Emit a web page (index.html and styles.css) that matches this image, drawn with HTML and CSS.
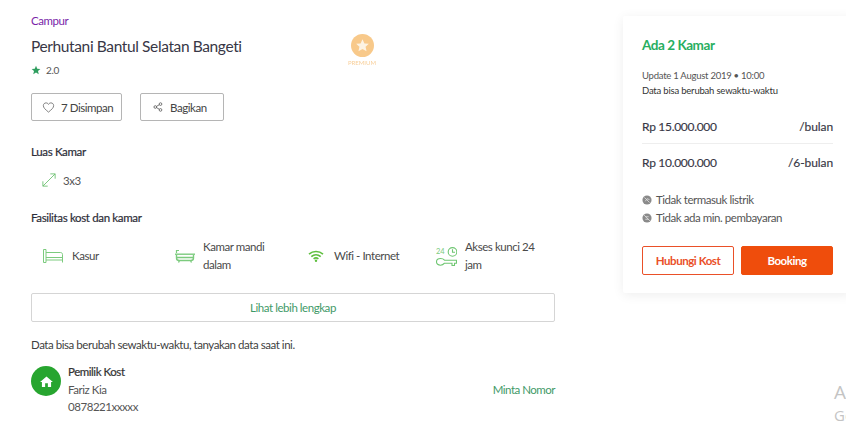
FILE: index.html
```html
<!DOCTYPE html>
<html lang="id">
<head>
<meta charset="utf-8">
<title>Perhutani Bantul Selatan Bangeti</title>
<link rel="stylesheet" href="styles.css">
</head>
<body>
<div class="page">
  <main class="main">
    <div class="kind">Campur</div>
    <div class="title-row">
      <h1 class="title">Perhutani Bantul Selatan Bangeti</h1>
      <div class="premium">
        <svg class="premium-icon" viewBox="0 0 24 24"><circle cx="12" cy="12" r="12" fill="#f8c98a"/><path d="M12 5.500l2 4.300 4.600.5-3.400 3.100 1 4.600-4.200-2.400-4.200 2.400 1-4.600-3.400-3.100 4.600-.5z" fill="#fdf3e3"/></svg>
        <span class="premium-label">PREMIUM</span>
      </div>
    </div>
    <div class="rating">
      <svg class="rating-star" viewBox="0 0 24 24"><path d="M12 2l3 7 7.500.7-5.700 4.900 1.800 7.400L12 18l-6.600 4 1.800-7.400L1.500 9.700 9 9z" fill="#2f9e5f"/></svg>
      <span>2.0</span>
    </div>
    <div class="actions">
      <button class="action action-save">
        <svg class="action-icon" viewBox="0 0 24 24"><path d="M12 20.500C6 15.500 2.500 12.500 2.500 8.500 2.500 5.500 4.800 3.500 7.400 3.500c2 0 3.600 1 4.600 2.800 1-1.800 2.600-2.800 4.600-2.800 2.600 0 4.900 2 4.900 5 0 4-3.500 7-9.500 12z" fill="none" stroke="#666" stroke-width="1.500"/></svg>
        <span>7 Disimpan</span>
      </button>
      <button class="action action-share">
        <svg class="action-icon share" viewBox="0 0 24 24"><g fill="none" stroke="#555" stroke-width="1.900"><circle cx="5.500" cy="12" r="3.200"/><circle cx="18" cy="5" r="3.200"/><circle cx="18" cy="19" r="3.200"/><path d="M8.500 10.500l6.700-4M8.500 13.500l6.700 4"/></g></svg>
        <span>Bagikan</span>
      </button>
    </div>

    <h2 class="section-title size-title">Luas Kamar</h2>
    <div class="size">
      <svg class="size-icon" viewBox="0 0 16 16"><path d="M1 15L15 1M9.500 1H15V6.500M1 9.500V15H6.500" fill="none" stroke="#6cc070" stroke-width="1"/></svg>
      <span>3x3</span>
    </div>

    <h2 class="section-title fac-title">Fasilitas kost dan kamar</h2>
    <div class="facilities">
      <div class="facility fac-bed">
        <svg class="fac-icon" viewBox="0 0 20 14"><path d="M.5.5h2.500v13h-2.500zM3 3.500h14.500c1.200 0 2 .8 2 2v8M3 8.500h16.500M3 11h16.500" fill="none" stroke="#7ccb7e" stroke-width="1"/></svg>
        <span>Kasur</span>
      </div>
      <div class="facility fac-bath">
        <svg class="fac-icon" viewBox="0 0 20 14"><path d="M1.500 4V1.500h2.500" fill="none" stroke="#7ccb7e" stroke-width="1.200"/><path d="M0 4.500h20v1.400H0z" fill="#7ccb7e"/><path d="M1.500 6v3c0 1.500 1.200 2.500 2.700 2.500h11.600c1.500 0 2.700-1 2.700-2.500V6M1.500 8.500h17M4.500 11.500L3.500 13.500M15.500 11.500L16.500 13.500" fill="none" stroke="#7ccb7e" stroke-width="1.400"/></svg>
        <span>Kamar mandi dalam</span>
      </div>
      <div class="facility fac-wifi">
        <svg class="fac-icon wifi" viewBox="0 0 16 12"><g fill="none" stroke="#5fbf3f" stroke-width="1.600"><path d="M1 4.200c4-3.600 10-3.600 14 0"/><path d="M3.300 6.600c2.700-2.300 6.700-2.300 9.400 0"/><path d="M5.600 8.800c1.400-1.100 3.400-1.100 4.800 0"/></g><circle cx="8" cy="10.800" r="1.200" fill="#5fbf3f"/></svg>
        <span>Wifi - Internet</span>
      </div>
      <div class="facility fac-key">
        <svg class="fac-icon key" viewBox="0 0 21 20"><g fill="none" stroke="#6fc672" stroke-width="1.100"><circle cx="16.500" cy="4.900" r="4.300"/><path d="M16.500 2.300V5.200H19"/><path d="M4.500 11.500c1.800 0 3.200.7 4 1.700h12v3h-2v2.300h-2.500v-2.300H8.500c-.8 1-2.200 2-4 2-2.300 0-4-1.300-4-3.300s1.700-3.400 4-3.400z"/></g><text class="key-num" x="0" y="7">24</text></svg>
        <span>Akses kunci 24 jam</span>
      </div>
    </div>

    <button class="more">Lihat lebih lengkap</button>
    <p class="note">Data bisa berubah sewaktu-waktu, tanyakan data saat ini.</p>

    <div class="owner">
      <div class="owner-avatar">
        <svg class="owner-icon" viewBox="0 0 14 12"><path d="M7 .5L14 6.500H12V12H8.500V8H5.500V12H2V6.500H0z" fill="#fff"/></svg>
      </div>
      <div class="owner-info">
        <div class="owner-role">Pemilik Kost</div>
        <div>Fariz Kia</div>
        <div>0878221xxxxx</div>
      </div>
      <a class="owner-link">Minta Nomor</a>
    </div>
  </main>

  <aside class="card">
    <div class="card-title">Ada 2 Kamar</div>
    <div class="update">Update 1 August 2019 • 10:00</div>
    <div class="update-note">Data bisa berubah sewaktu-waktu</div>
    <div class="price price-first"><span>Rp 15.000.000</span><span class="per">/bulan</span></div>
    <div class="price price-second"><span>Rp 10.000.000</span><span class="per">/6-bulan</span></div>
    <ul class="terms">
      <li><svg class="term-icon" viewBox="0 0 12 12"><circle cx="6" cy="6" r="5.500" fill="#8a8a8a"/><path d="M3 3l6 6M4 7.500l2-3 3 1" stroke="#ddd" stroke-width="1" fill="none"/></svg>Tidak termasuk listrik</li>
      <li><svg class="term-icon" viewBox="0 0 12 12"><circle cx="6" cy="6" r="5.500" fill="#8a8a8a"/><path d="M2.500 2.500l7 7M4 4.500h4M4 7.500h4" stroke="#ddd" stroke-width="1" fill="none"/></svg>Tidak ada min. pembayaran</li>
    </ul>
    <div class="card-buttons">
      <button class="btn btn-outline">Hubungi Kost</button>
      <button class="btn btn-solid">Booking</button>
    </div>
  </aside>
  <div class="watermark"><div class="wm-a">Activate Windows</div><div class="wm-g">Go to Settings</div></div>
</div>
</body>
</html>
```
FILE: styles.css
```css
* { box-sizing: border-box; }
html, body { margin: 0; padding: 0; background: #fff; }
body { font-family: Lato, "Open Sans", sans-serif; font-size: 11.500px; letter-spacing: -.45px; color: #383746; }
button { letter-spacing: inherit; }
.page {
  position: relative;
  width: 846px;
  height: 427px;
  overflow: hidden;
  display: flex;
  align-items: flex-start;
  padding-left: 31px;
  gap: 68px;
}
.main { width: 524px; flex: none; padding-top: 14px; }
.kind { line-height: 14px; color: #7a1fa8; }
.title-row { display: flex; align-items: flex-start; height: 37px; margin-top: 6px; }
.title {
  margin: 0;
  width: 316px;
  padding-top: 5px;
  font-size: 15.500px;
  font-weight: 400;
  line-height: 14px;
  letter-spacing: -.38px;
}
.premium { display: flex; flex-direction: column; align-items: center; width: 30px; filter: blur(.3px); }
.premium-icon { width: 23px; height: 23px; display: block; }
.premium-label { font-size: 6px; line-height: 8px; letter-spacing: 0; color: #f8cf9a; margin-top: 2px; white-space: nowrap; }
.rating { display: flex; align-items: center; font-size: 10px; letter-spacing: -.35px; color: #555; height: 12px; margin-top: -7px; gap: 5px; }
.rating-star { width: 10px; height: 10px; }
.actions { display: flex; gap: 18px; margin-top: 17px; }
.action {
  height: 28px;
  display: flex;
  align-items: center;
  background: #fff;
  border: 1px solid #b5b5b5;
  border-radius: 2px;
  font: 11.500px Lato, sans-serif;
  color: #444;
  padding: 0;
  white-space: nowrap;
}
.action-save { width: 91px; padding-left: 10px; gap: 6px; }
.action-share { width: 84px; padding-left: 12px; gap: 7px; }
.action-icon { width: 10px; height: 10px; flex: none; }
.action-save .action-icon { width: 13px; height: 13px; }
.section-title { margin: 0; font-size: 11.500px; font-weight: 400; line-height: 14px; letter-spacing: -.35px; color: #2d2d38; -webkit-text-stroke: .2px #2d2d38; }
.size-title { margin-top: 24px; }
.size { display: flex; align-items: center; gap: 7px; margin: 14px 0 0 11px; color: #555; height: 14px; }
.size-icon { width: 14px; height: 14px; }
.fac-title { margin-top: 24px; }
.facilities { display: flex; margin-top: 10px; height: 42px; }
.facility { display: flex; align-items: center; line-height: 18.500px; color: #4a4a4a; flex: none; }
.fac-icon { width: 20px; height: 14px; flex: none; }
.fac-bed { width: 144px; padding-left: 12px; gap: 9px; }
.fac-bath { width: 133px; padding-right: 30px; gap: 8px; }
.fac-wifi { width: 128px; gap: 10px; }
.fac-wifi .wifi { width: 16px; height: 12px; }
.fac-key { width: 110px; gap: 8px; }
.fac-key .key { width: 21px; height: 20px; margin-top: 2px; }
.key-num { font-family: Lato, sans-serif; font-size: 7.500px; letter-spacing: 0; fill: #7ccb7e; }
.more {
  display: block;
  width: 100%;
  height: 29px;
  margin-top: 16px;
  background: #fff;
  border: 1px solid #d5d5d5;
  border-radius: 2px;
  font: 11.500px Lato, sans-serif;
  color: #3f9a68;
}
.note { margin: 16px 0 0; line-height: 14px; color: #3f3f3f; }
.owner { display: flex; align-items: flex-start; margin-top: 11px; line-height: 17.500px; color: #555; }
.owner-avatar { width: 30px; height: 30px; border-radius: 50%; background: #27a52f; display: flex; align-items: center; justify-content: center; margin-top: 3px; flex: none; }
.owner-icon { width: 13px; height: 11px; }
.owner-info { margin-left: 7px; }
.owner-role { color: #333; -webkit-text-stroke: .2px #333; }
.owner-link { margin-left: auto; margin-top: 18px; letter-spacing: -.5px; color: #3f9a68; }
.card {
  flex: none;
  width: 229px;
  height: 277px;
  margin-top: 16px;
  padding: 21px 19px 0;
  background: #fff;
  box-shadow: 0 2px 12px rgba(0, 0, 0, .07);
  border-radius: 2px;
}
.card-title { font-size: 13.500px; font-weight: 700; line-height: 16px; color: #27ae60; }
.update { margin-top: 15px; font-size: 9.500px; line-height: 15px; letter-spacing: -.25px; color: #555; }
.update-note { font-size: 9.500px; line-height: 15px; letter-spacing: -.2px; color: #333; }
.price {
  display: flex;
  justify-content: space-between;
  font-size: 12px;
  line-height: 14px;
  letter-spacing: -.3px;
  color: #383746;
  -webkit-text-stroke: .15px #383746;
}
.per { letter-spacing: -.1px; }
.price-first { height: 35px; padding-top: 11px; margin-top: 11px; border-bottom: 1px solid #eee; }
.price-second { height: 36px; padding-top: 12px; }
.terms { list-style: none; margin: 11px 0 0; padding: 0; line-height: 18px; color: #555; }
.terms li { display: flex; align-items: center; gap: 4px; }
.term-icon { width: 10px; height: 10px; flex: none; }
.card-buttons { display: flex; gap: 7px; margin-top: 19px; }
.btn { width: 92px; height: 29px; border-radius: 2px; font: 700 11.500px Lato, sans-serif; padding: 0; }
.btn-outline { background: #fff; border: 1px solid #ea5028; color: #ea5028; }
.btn-solid { background: #ef4d0c; border: 1px solid #ef4d0c; color: #fff; }
.watermark { position: absolute; left: 834px; top: 380px; white-space: nowrap; letter-spacing: 0; color: #c4c4c4; font-family: "Open Sans", sans-serif; }
.wm-a { font-size: 19px; line-height: 24px; }
.wm-g { font-size: 15px; line-height: 22px; }
```
